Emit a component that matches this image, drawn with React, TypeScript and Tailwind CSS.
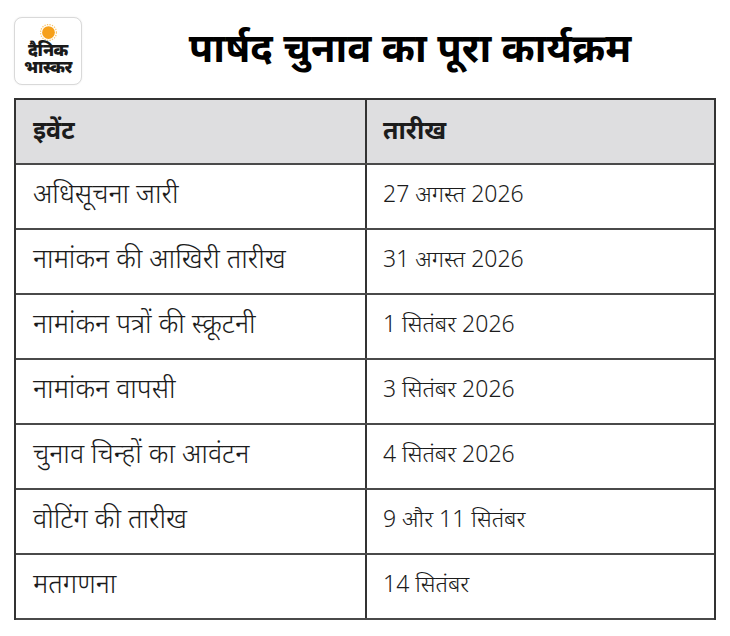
const rows: Array<[string, string]> = [
  ["अधिसूचना जारी", "27 अगस्त 2026"],
  ["नामांकन की आखिरी तारीख", "31 अगस्त 2026"],
  ["नामांकन पत्रों की स्क्रूटनी", "1 सितंबर 2026"],
  ["नामांकन वापसी", "3 सितंबर 2026"],
  ["चुनाव चिन्हों का आवंटन", "4 सितंबर 2026"],
  ["वोटिंग की तारीख", "9 और 11 सितंबर"],
  ["मतगणना", "14 सितंबर"],
];

function Logo() {
  return (
    <div className="w-[68px] h-[68px] mt-[4px] rounded-[8px] border border-[#d9d9d9] bg-white flex flex-col items-center pt-[6px] shadow-[0_0_2px_rgba(0,0,0,0.08)]">
      <svg width="17" height="17" viewBox="0 0 16 16">
        <circle cx="8" cy="8" r="6" fill="#f6a01a" />
        <circle cx="8" cy="8" r="7.5" fill="none" stroke="#f9c56a" strokeWidth="1.2" strokeDasharray="1.2 1.2" />
      </svg>
      <div className="text-[17px] leading-[17px] font-black text-[#1a1a1a] tracking-tight">दैनिक</div>
      <div className="text-[17px] leading-[17px] font-black text-[#1a1a1a] tracking-tight">भास्कर</div>
    </div>
  );
}

export default function App() {
  return (
    <div className="w-[730px] h-[636px] bg-white font-['Noto_Sans',sans-serif] text-[#1c1c1c]">
      <div className="flex items-center h-[98px] pl-[14px] pr-[14px]">
        <Logo />
        <h1 className="flex-1 text-center text-[40px] font-bold leading-none text-black -mt-[4px] pl-[22px]">
          पार्षद चुनाव का पूरा कार्यक्रम
        </h1>
      </div>
      <div className="mx-[14px] border-2 border-[#333] border-b-0">
        <div className="grid grid-cols-[351px_1fr] h-[65px] bg-[#dedee0] border-b-2 border-[#4a4a4a]">
          <div className="flex items-center pl-[17px] border-r-2 border-[#333] text-[25px] font-bold pb-[4px]">इवेंट</div>
          <div className="flex items-center pl-[16px] text-[25px] font-bold pb-[4px]">तारीख</div>
        </div>
        {rows.map(([event, date]) => (
          <div key={event} className="grid grid-cols-[351px_1fr] h-[65px] border-b-2 border-[#4a4a4a]">
            <div className="flex items-center pl-[17px] border-r-2 border-[#333] text-[27px] font-light pb-[6px]">{event}</div>
            <div className="flex items-center pl-[16px] text-[23px] font-light pb-[6px]">{date}</div>
          </div>
        ))}
      </div>
    </div>
  );
}
